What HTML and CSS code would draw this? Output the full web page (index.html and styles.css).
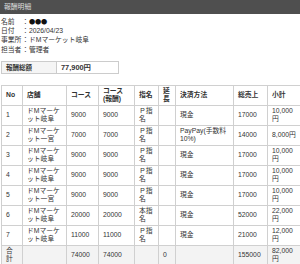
FILE: index.html
```html
<!DOCTYPE html>
<html lang="ja">
<head>
<meta charset="utf-8">
<title>報酬明細</title>
<link rel="stylesheet" href="styles.css">
</head>
<body>
<div class="titlebar">報酬明細</div>
<div class="content">
  <div class="info">
    <div class="info-row"><span class="info-label">名前</span><span class="info-colon">：</span><span class="info-value masked">●●●</span></div>
    <div class="info-row"><span class="info-label">日付</span><span class="info-colon">：</span><span class="info-value">2026/04/23</span></div>
    <div class="info-row"><span class="info-label">事業所</span><span class="info-colon">：</span><span class="info-value">ドMマーケット岐阜</span></div>
    <div class="info-row"><span class="info-label">担当者</span><span class="info-colon">：</span><span class="info-value">管理者</span></div>
  </div>

  <table class="summary">
    <tr><th class="summary-label">報酬総額</th><td class="summary-value">77,900円</td></tr>
  </table>

  <table class="detail">
    <colgroup>
      <col class="c-no"><col class="c-shop"><col class="c-course"><col class="c-reward">
      <col class="c-nom"><col class="c-ext"><col class="c-pay"><col class="c-sales"><col class="c-sub">
    </colgroup>
    <thead>
      <tr><th>No</th><th>店舗</th><th>コース</th><th>コース(報酬)</th><th>指名</th><th>延長</th><th>決済方法</th><th>総売上</th><th>小計</th></tr>
    </thead>
    <tbody>
      <tr><td>1</td><td>ドMマーケット岐阜</td><td>9000</td><td>9000</td><td>Ｐ指名</td><td></td><td>現金</td><td>17000</td><td>10,000円</td></tr>
      <tr><td>2</td><td>ドMマーケット一宮</td><td>7000</td><td>7000</td><td>Ｐ指名</td><td></td><td>PayPay(手数料10%)</td><td>14000</td><td>8,000円</td></tr>
      <tr><td>3</td><td>ドMマーケット岐阜</td><td>9000</td><td>9000</td><td>Ｐ指名</td><td></td><td>現金</td><td>17000</td><td>10,000円</td></tr>
      <tr><td>4</td><td>ドMマーケット岐阜</td><td>9000</td><td>9000</td><td>Ｐ指名</td><td></td><td>現金</td><td>17000</td><td>10,000円</td></tr>
      <tr><td>5</td><td>ドMマーケット一宮</td><td>9000</td><td>9000</td><td>Ｐ指名</td><td></td><td>現金</td><td>17000</td><td>10,000円</td></tr>
      <tr><td>6</td><td>ドMマーケット岐阜</td><td>20000</td><td>20000</td><td>本指名</td><td></td><td>現金</td><td>52000</td><td>22,000円</td></tr>
      <tr><td>7</td><td>ドMマーケット岐阜</td><td>11000</td><td>11000</td><td>Ｐ指名</td><td></td><td>現金</td><td>21000</td><td>12,000円</td></tr>
    </tbody>
    <tfoot>
      <tr class="total"><td>合計</td><td></td><td>74000</td><td>74000</td><td></td><td>0</td><td></td><td>155000</td><td>82,000円</td></tr>
    </tfoot>
  </table>
</div>
</body>
</html>
```

FILE: styles.css
```css
html, body {
  margin: 0;
  padding: 0;
  background: #ffffff;
}

body {
  font-family: "Liberation Sans", "Noto Sans CJK JP", sans-serif;
  font-size: 6.8px;
  color: #333333;
}

.titlebar {
  background: #4f4f4f;
  color: #dddddd;
  height: 14px;
  line-height: 14px;
  padding-left: 4px;
  font-size: 6.8px;
}

.content {
  padding: 3px 1px 0 1px;
}

.info {
  display: flex;
  flex-direction: column;
}

.info-row {
  display: flex;
  line-height: 9.2px;
}

.info-label {
  width: 21px;
  white-space: nowrap;
}

.info-colon {
  width: 7px;
}

.masked {
  font-family: "Noto Sans CJK JP", sans-serif;
  font-size: 6.2px;
  color: #111111;
  letter-spacing: -0.2px;
}

.summary {
  border-collapse: collapse;
  margin-top: 7px;
  width: 118px;
}

.summary th,
.summary td {
  border: 1px solid #cccccc;
  height: 11px;
  padding: 0 4px;
  text-align: left;
  line-height: 11px;
}

.summary-label {
  width: 46px;
  background: #f5f5f5;
  font-weight: bold;
  font-size: 6.5px;
}

.summary-value {
  font-weight: bold;
  font-size: 7.4px;
}

.detail {
  border-collapse: collapse;
  table-layout: fixed;
  width: 299px;
  margin-top: 11px;
}

.c-no { width: 21px; }
.c-shop { width: 44px; }
.c-course { width: 32px; }
.c-reward { width: 36px; }
.c-nom { width: 24px; }
.c-ext { width: 17px; }
.c-pay { width: 58px; }
.c-sales { width: 34px; }
.c-sub { width: 33px; }

.detail th,
.detail td {
  border: 1px solid #d0d0d0;
  padding: 1.5px 4px;
  line-height: 7.9px;
  text-align: left;
  vertical-align: middle;
  height: 16px;
}

.detail th {
  font-weight: bold;
}

.total td {
  background: #f3f3f3;
}
```
